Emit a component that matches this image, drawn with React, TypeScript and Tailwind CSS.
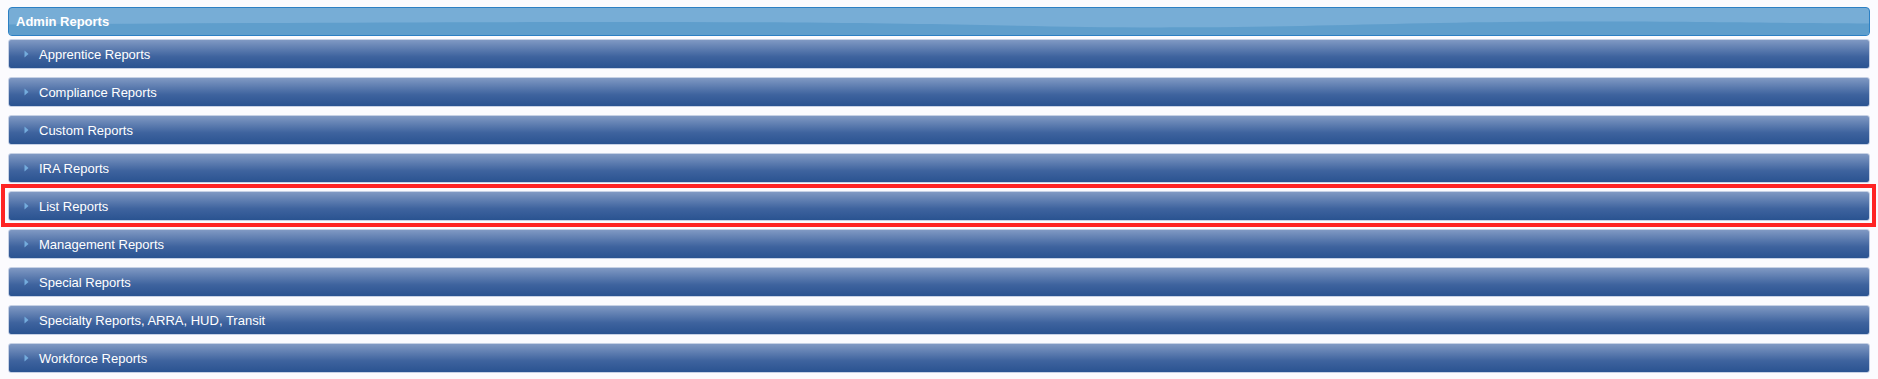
import React from 'react';

const REPORTS = [
  'Apprentice Reports',
  'Compliance Reports',
  'Custom Reports',
  'IRA Reports',
  'List Reports',
  'Management Reports',
  'Special Reports',
  'Specialty Reports, ARRA, HUD, Transit',
  'Workforce Reports',
];

const HIGHLIGHTED = 'List Reports';

function Arrow() {
  return (
    <svg width="5" height="8" viewBox="0 0 5 8" className="shrink-0">
      <path d="M0.5 0.5 L4.5 4 L0.5 7.5 Z" fill="#74acdd" />
    </svg>
  );
}

function ReportRow({ label }: { label: string }) {
  return (
    <div className="flex h-[30px] items-center rounded-[3px] border border-[#c6d1e5] bg-gradient-to-b from-[#8099c3] via-[#3e639e] via-60% to-[#2a5391] pl-[15px] cursor-pointer">
      <Arrow />
      <span className="ml-[10px] text-[13px] leading-none text-white">{label}</span>
    </div>
  );
}

export default function App() {
  return (
    <div
      className="min-h-screen bg-[#fbfbfe] px-[8px] pt-[7px]"
      style={{ fontFamily: '"Liberation Sans", Arial, Helvetica, sans-serif' }}
    >
      <div className="relative flex h-[29px] items-center overflow-hidden rounded-[4px] border border-[#2c80c4] bg-[#77add6]">
        <svg
          className="absolute inset-0 h-full w-full"
          viewBox="0 0 1000 28"
          preserveAspectRatio="none"
        >
          <path
            d="M0 17 C 150 15, 300 14, 420 15 C 520 16, 560 21, 640 20 C 720 19, 760 14, 850 14 C 920 14, 960 16, 1000 16 L1000 28 L0 28 Z"
            fill="#5f9ecc"
          />
        </svg>
        <span className="relative pl-[7px] text-[13px] font-bold leading-none text-white">Admin Reports</span>
      </div>

      <div className="mt-[3px] flex flex-col gap-[8px]">
        {REPORTS.map((r) =>
          r === HIGHLIGHTED ? (
            <div key={r} className="relative">
              <ReportRow label={r} />
              <div className="pointer-events-none absolute -top-[7px] -bottom-[6px] -left-[7px] -right-[6px] border-4 border-[#fe2424]" />
            </div>
          ) : (
            <ReportRow key={r} label={r} />
          )
        )}
      </div>
    </div>
  );
}
